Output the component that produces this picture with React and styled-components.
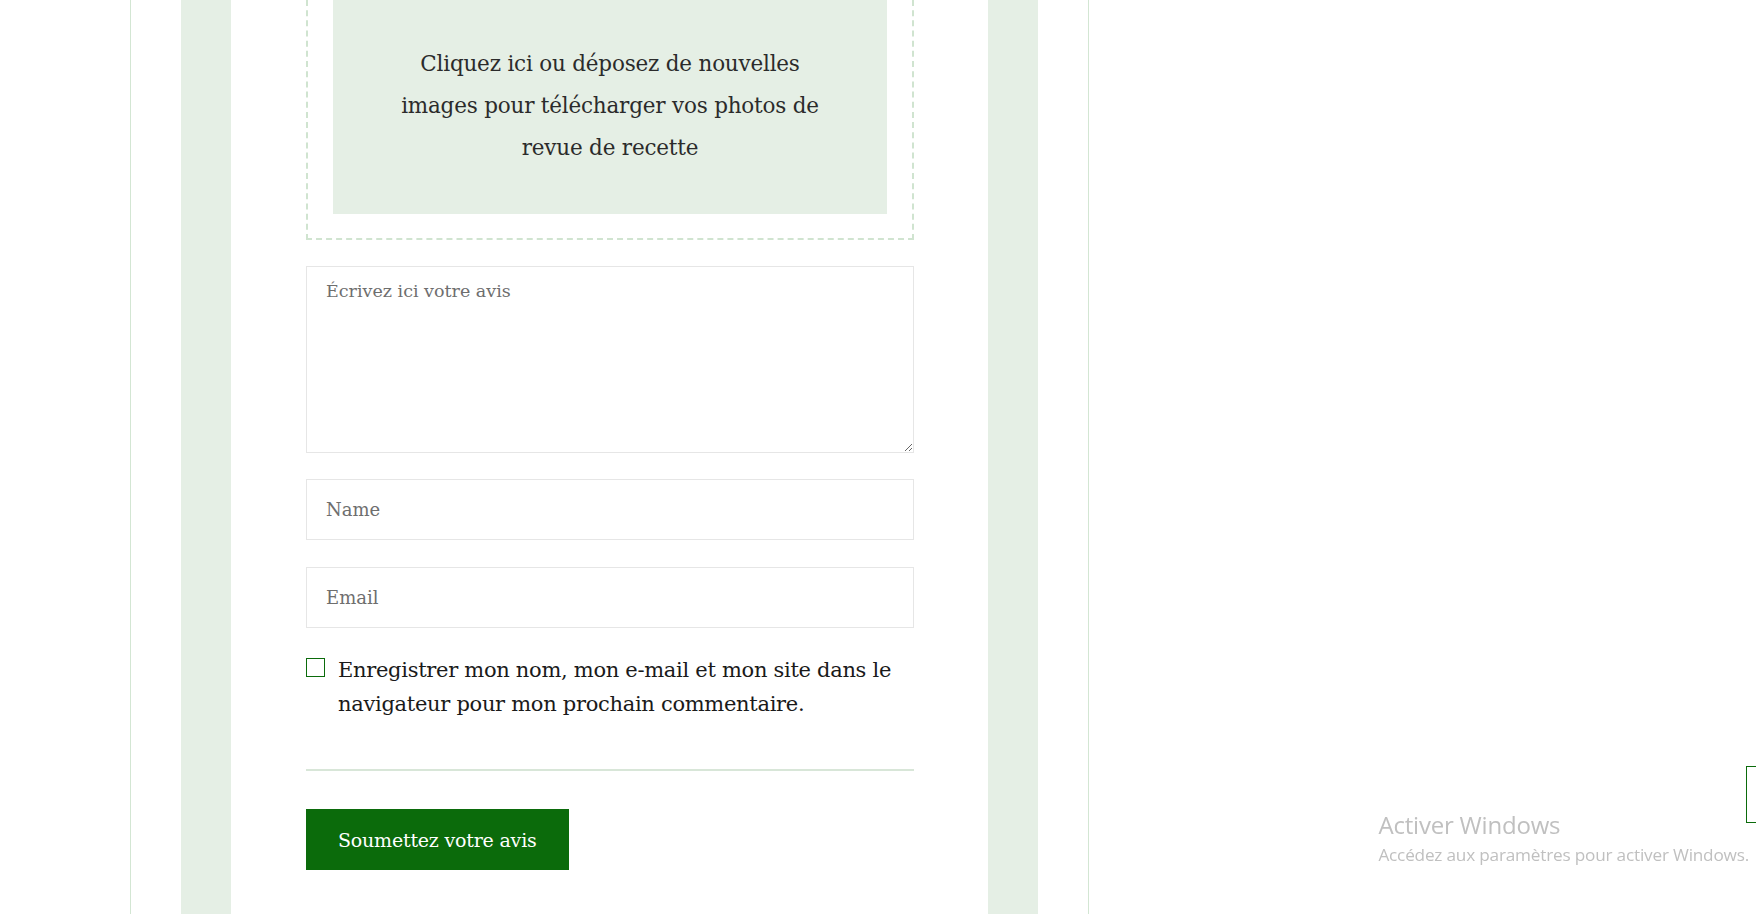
import React from 'react';
import styled, { createGlobalStyle } from 'styled-components';

const GlobalStyle = createGlobalStyle`
	html, body {
		margin: 0;
		padding: 0;
		background: #fff;
		overflow: hidden;
	}
	body {
		font-family: "DejaVu Serif", "Liberation Serif", serif;
		color: #222;
	}
`;

const Site = styled.div`
	box-sizing: border-box;
	width: 959px;
	height: 100vh;
	margin-left: 130px;
	padding: 0 50px;
	border-left: 1px solid #d3e6d3;
	border-right: 1px solid #d3e6d3;
`;

const Card = styled.div`
	box-sizing: border-box;
	height: 100%;
	border-left: 50px solid #e5efe5;
	border-right: 50px solid #e5efe5;
	padding: 0 75px;
`;

const Form = styled.form`
	display: flex;
	flex-direction: column;
	width: 608px;
`;

const Dropzone = styled.div`
	border: 2px dashed #d0e4d0;
	border-top: none;
	padding: 0 25px 24px;
`;

const DropInner = styled.div`
	background: #e5efe5;
	padding: 43px 56px 45px;
	text-align: center;
	font-size: 21.5px;
	line-height: 42px;
	color: #2b2b2b;
	letter-spacing: -0.2px;
`;

const Field = styled.input`
	box-sizing: border-box;
	height: 61px;
	margin-top: ${p => p.$gap || 26}px;
	padding: 0 19px;
	border: 1px solid #e6e6e6;
	font-family: inherit;
	font-size: 18px;
	color: #222;
	outline: none;
	&::placeholder {
		color: #6e6e6e;
	}
`;

const Area = styled(Field).attrs({ as: 'textarea' })`
	height: 187px;
	padding: 11px 19px;
	font-size: 17.5px;
	line-height: 26px;
	resize: vertical;
`;

const Consent = styled.label`
	display: flex;
	align-items: flex-start;
	gap: 13px;
	margin-top: 25px;
	font-size: 21px;
	line-height: 34px;
	color: #1a1a1a;
	letter-spacing: -0.3px;
`;

const Box = styled.input.attrs({ type: 'checkbox' })`
	appearance: none;
	flex: none;
	width: 19px;
	height: 19px;
	margin: 5px 0 0;
	border: 1px solid #0b6b0b;
	background: #fff;
`;

const Rule = styled.hr`
	width: 100%;
	margin: 48px 0 0;
	border: none;
	border-top: 2px solid #d8e6d8;
`;

const Submit = styled.button`
	align-self: flex-start;
	height: 61px;
	margin-top: 38px;
	padding: 0 32px;
	border: none;
	background: #0b6b0b;
	color: #fff;
	font-family: inherit;
	font-size: 19px;
	font-weight: 500;
	letter-spacing: -0.2px;
	cursor: pointer;
`;

const Watermark = styled.div`
	position: fixed;
	right: 7px;
	top: 809px;
	font-family: "Open Sans", "Noto Sans", sans-serif;
	color: #c0c0c0;
`;

const WatermarkTitle = styled.div`
	font-size: 24px;
	line-height: 32px;
	letter-spacing: -0.2px;
`;

const WatermarkText = styled.div`
	font-size: 17.2px;
	line-height: 28px;
	letter-spacing: -0.2px;
`;

const FloatTab = styled.div`
	position: fixed;
	top: 766px;
	right: -40px;
	width: 48px;
	height: 55px;
	border: 1px solid #0b6b0b;
	background: #fff;
`;

export default function App() {
	return (
		<>
			<GlobalStyle />
			<Site>
				<Card>
					<Form onSubmit={e => e.preventDefault()}>
						<Dropzone>
							<DropInner>
								Cliquez ici ou déposez de nouvelles images pour télécharger vos photos de revue de recette
							</DropInner>
						</Dropzone>
						<Area placeholder='Écrivez ici votre avis' />
						<Field type='text' placeholder='Name' />
						<Field type='email' placeholder='Email' $gap={27} />
						<Consent>
							<Box />
							<span>Enregistrer mon nom, mon e-mail et mon site dans le navigateur pour mon prochain commentaire.</span>
						</Consent>
						<Rule />
						<Submit type='submit'>Soumettez votre avis</Submit>
					</Form>
				</Card>
			</Site>
			<Watermark>
				<WatermarkTitle>Activer Windows</WatermarkTitle>
				<WatermarkText>Accédez aux paramètres pour activer Windows.</WatermarkText>
			</Watermark>
			<FloatTab />
		</>
	);
}
